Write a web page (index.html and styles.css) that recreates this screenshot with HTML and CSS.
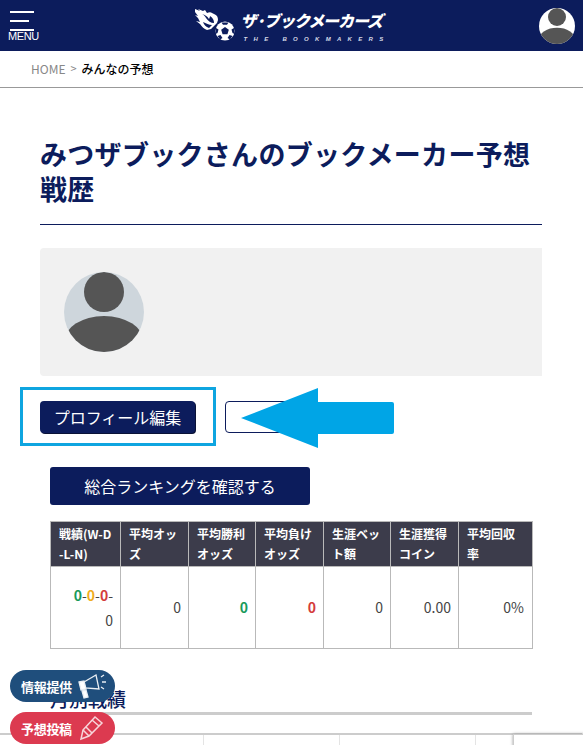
FILE: index.html
```html
<!DOCTYPE html>
<html lang="ja">
<head>
    <meta charset="UTF-8">
    <meta name="viewport" content="width=device-width, initial-scale=1.0">
    <title>みつザブックさんのブックメーカー予想戦歴</title>
    <link rel="stylesheet" href="styles.css">
</head>
<body>
    <div class="page">
        <header class="site-header">
            <div class="menu-btn">
                <span class="menu-bar"></span>
                <span class="menu-bar short"></span>
                <span class="menu-bar"></span>
                <span class="menu-label">MENU</span>
            </div>
            <div class="logo">
                <svg class="logo-mark" width="44" height="36" viewBox="0 0 44 36">
                    <g fill="#fff">
                        <path d="M1 1l5 2-2-2 5 2 2-1 2 3c2-1 4-1 5 0l2 1c3 1 4 3 4 6l-1 3-6 6-4 1c-3-1-5-3-7-6l-4-3 4 1-2-4-3-3 3 1-3-4z"/>
                    </g>
                    <path d="M8 6c3 1 5 2 7 5 1-2 1-3 1-3 3 2 4 4 4 7-3 0-6-2-8-5-1-2-2-3-4-4z" fill="#0c1c5c"/>
                    <path d="M9 14c3 1 6 3 9 3l-3 3c-3-1-5-3-6-6z" fill="#0c1c5c"/>
                    <circle cx="31" cy="23" r="10.500" fill="#0c1c5c"/>
                    <circle cx="31" cy="23" r="9.500" fill="#fff"/>
                    <g fill="#0c1c5c">
                        <path d="M31 19l3.800 2.800-1.400 4.500h-4.800l-1.400-4.500z"/>
                        <path d="M27.500 14.500h7l-1.500 2.200h-4zM40 20l.5 6-2-1-1-3.500zM22 20l-.5 6 2-1 1-3.500zM26 31.500l-2.500-3.500 3-1 2 3zM36 31.500l2.500-3.500-3-1-2 3z"/>
                    </g>
                </svg>
                <div class="logo-text">
                    <span class="logo-jp">ザ·ブックメーカーズ</span>
                    <span class="logo-en">THE BOOKMAKERS</span>
                </div>
            </div>
            <svg class="header-avatar" width="36" height="36" viewBox="0 0 80 80">
                <defs><clipPath id="clipTop"><circle cx="40" cy="40" r="40"/></clipPath></defs>
                <circle cx="40" cy="40" r="40" fill="#fff"/>
                <g clip-path="url(#clipTop)" fill="#555">
                    <circle cx="40" cy="20" r="20"/>
                    <ellipse cx="40" cy="70" rx="40" ry="26"/>
                </g>
            </svg>
        </header>

        <nav class="breadcrumb">
            <span class="crumb-home">HOME</span>
            <span class="crumb-sep">&gt;</span>
            <span class="crumb-now">みんなの予想</span>
        </nav>

        <main class="content">
            <h1 class="page-title">みつザブックさんのブックメーカー予想戦歴</h1>

            <div class="profile-box">
                <svg width="80" height="80" viewBox="0 0 80 80">
                    <defs><clipPath id="clipMain"><circle cx="40" cy="40" r="40"/></clipPath></defs>
                    <circle cx="40" cy="40" r="40" fill="#ced6dc"/>
                    <g clip-path="url(#clipMain)" fill="#555">
                        <circle cx="40" cy="20" r="20"/>
                        <ellipse cx="40" cy="70" rx="40" ry="26"/>
                    </g>
                </svg>
            </div>

            <div class="profile-actions">
                <a class="btn-edit">プロフィール編集</a>
                <a class="btn-outline"></a>
            </div>

            <div class="inner">
                <a class="btn-rank">総合ランキングを確認する</a>

                <table class="stats">
                    <tr>
                        <th class="c1">戦績(W-D<br>-L-N)</th>
                        <th class="c2">平均オッズ</th>
                        <th class="c3">平均勝利オッズ</th>
                        <th class="c4">平均負けオッズ</th>
                        <th class="c5">生涯ベット額</th>
                        <th class="c6">生涯獲得コイン</th>
                        <th class="c7">平均回収率</th>
                    </tr>
                    <tr>
                        <td><b class="win">0</b>-<b class="draw">0</b>-<b class="lose">0</b>-<br>0</td>
                        <td>0</td>
                        <td><b class="win">0</b></td>
                        <td><b class="lose">0</b></td>
                        <td>0</td>
                        <td>0.00</td>
                        <td class="rate">0%</td>
                    </tr>
                </table>

                <h2 class="section-title">月別戦績</h2>
                <div class="monthly">
                    <span></span><span></span><span></span><span></span>
                </div>
            </div>
        </main>

        <!-- annotation drawn over the page -->
        <div class="note-box"></div>
        <svg class="note-arrow" width="153" height="60" viewBox="0 0 153 60">
            <path d="M0 30L77 0V14H151a2 2 0 0 1 2 2V44a2 2 0 0 1-2 2H77V60z" fill="#00a5e6"/>
        </svg>

        <a class="float-btn info">
            情報提供
            <svg width="28" height="26" viewBox="0 0 28 26" fill="none" stroke="#e9eef3" stroke-width="1.300">
                <path d="M6 9l12-7 3 14-14-1z"/>
                <path d="M1 9l5-1 2 8-5 1z" fill="#fff"/>
                <path d="M4 18l4-1 2 7-4 1z" fill="#fff"/>
                <path d="M23 4l3-2M24 9h4M23 14l3 2"/>
            </svg>
        </a>
        <a class="float-btn post">
            予想投稿
            <svg width="28" height="26" viewBox="0 0 28 26" fill="none" stroke="#f7d5da" stroke-width="1.500">
                <path d="M5 15L17 2l7 6-13 13-8 3z"/>
                <path d="M5 15l6 6M14 5l7 6M8 12l6 6"/>
            </svg>
        </a>
        <div class="captcha-corner"></div>
    </div>
</body>
</html>
```

FILE: styles.css
```css
html, body {
    margin: 0;
    padding: 0;
}
body {
    font-family: "Noto Sans CJK JP", "Noto Sans", sans-serif;
    color: #222;
    background-color: #fff;
}
.page {
    position: relative;
    width: 583px;
    height: 745px;
    overflow: hidden;
}

/* header */
.site-header {
    display: grid;
    grid-template-columns: 1fr auto 1fr;
    align-items: center;
    height: 51px;
    padding: 0 8px;
    box-sizing: border-box;
    background-color: #0c1c5c;
}
.menu-btn {
    display: flex;
    flex-direction: column;
    align-items: flex-start;
    align-self: start;
    width: 30px;
    padding-top: 11px;
}
.menu-bar {
    width: 24px;
    height: 2px;
    margin: 0 0 7px 2px;
    background-color: #fff;
}
.menu-bar.short {
    width: 19px;
}
.menu-bar:nth-child(3) {
    margin-bottom: -1px;
}
.menu-label {
    font-family: "Liberation Sans", sans-serif;
    font-size: 11px;
    line-height: 12px;
    letter-spacing: -0.4px;
    color: #fff;
}
.logo {
    display: flex;
    align-items: center;
    gap: 3px;
}
.logo-text {
    display: flex;
    flex-direction: column;
}
.logo-jp {
    font-size: 16px;
    line-height: 24px;
    font-weight: 900;
    font-style: italic;
    letter-spacing: -1.100px;
    white-space: nowrap;
    color: #fff;
}
.logo-en {
    margin: 3px 0 0 3px;
    font-family: "Liberation Sans", sans-serif;
    font-size: 6px;
    line-height: 8px;
    font-weight: bold;
    font-style: italic;
    letter-spacing: 6.300px;
    white-space: nowrap;
    color: #d5d9e6;
}
.header-avatar {
    justify-self: end;
}

/* breadcrumb */
.breadcrumb {
    display: flex;
    align-items: center;
    gap: 5px;
    height: 34px;
    padding: 0 0 2px 31px;
    border-bottom: 1px solid #999;
    font-size: 12px;
}
.crumb-home {
    color: #888;
}
.crumb-sep {
    color: #888;
    font-size: 11px;
}
.crumb-now {
    color: #000;
    font-weight: 500;
}

/* main */
.content {
    padding: 48px 41px 0 40px;
}
.page-title {
    margin: 0;
    padding-bottom: 18px;
    border-bottom: 1px solid #0c1c5c;
    font-size: 27px;
    line-height: 35px;
    letter-spacing: 0.3px;
    font-weight: bold;
    color: #0c1c5c;
}
.profile-box {
    display: flex;
    align-items: center;
    height: 128px;
    margin-top: 23px;
    padding-left: 24px;
    box-sizing: border-box;
    border-radius: 4px 0 0 4px;
    background-color: #f1f1f1;
}
.profile-actions {
    display: flex;
    gap: 30px;
    margin-top: 25px;
}
.btn-edit {
    display: block;
    width: 155px;
    height: 32px;
    border-radius: 4px;
    background-color: #0c1c5c;
    box-shadow: 1px 1px 0 #0a1236;
    color: #fff;
    font-size: 16px;
    line-height: 32px;
    text-align: center;
}
.btn-outline {
    display: block;
    width: 90px;
    height: 30px;
    border: 1px solid #0c1c5c;
    border-radius: 4px;
}
.inner {
    padding: 34px 10px 0;
}
.btn-rank {
    display: block;
    width: 260px;
    height: 38px;
    border-radius: 3px;
    background-color: #0c1c5c;
    color: #fff;
    font-size: 16px;
    line-height: 38px;
    text-align: center;
}
.stats {
    width: 482px;
    margin-top: 16px;
    border-collapse: collapse;
    table-layout: fixed;
    font-size: 14px;
}
.stats th, .stats td {
    box-sizing: border-box;
    border: 1px solid #b9b9b9;
    padding: 0 7px;
}
.stats th {
    height: 45px;
    padding-left: 8px;
    padding-right: 4px;
    background-color: #3c3c4b;
    color: #fff;
    font-size: 12px;
    line-height: 20px;
    text-align: left;
    word-break: break-all;
}
.stats th.c7 {
    padding-right: 14px;
}
.stats td {
    height: 82px;
    line-height: 25px;
    text-align: right;
    color: #444;
}
.stats td.rate {
    padding-right: 8px;
}
.c1 { width: 70px; }
.c2 { width: 68px; }
.c3 { width: 67px; }
.c4 { width: 68px; }
.c5 { width: 67px; }
.c6 { width: 68px; }
.c7 { width: 74px; }
.win { color: #1a9a5c; }
.draw { color: #f0ad1e; }
.lose { color: #d43c3c; }
.section-title {
    margin: 37px 0 0;
    border-bottom: 3px solid #ccc;
    font-size: 19px;
    line-height: 26px;
    font-weight: 500;
    color: #0c1c5c;
}

/* next table, only its top edge is on screen */
.monthly {
    display: flex;
    height: 30px;
    margin: 18px -50px 0 -50px;
    border-top: 2px solid #ccc;
}
.monthly span {
    flex: none;
    width: 136px;
    box-sizing: border-box;
    border-right: 1px solid #e4e4e4;
}
.monthly span:first-child {
    width: 204px;
}

/* annotation */
.note-box {
    position: absolute;
    left: 20px;
    top: 387px;
    width: 190px;
    height: 53px;
    border: 3px solid #0ea5e0;
}
.note-arrow {
    position: absolute;
    left: 241px;
    top: 388px;
}

/* floating buttons */
.float-btn {
    position: absolute;
    left: 10px;
    display: flex;
    align-items: center;
    gap: 6px;
    width: 105px;
    height: 32px;
    padding-left: 11px;
    box-sizing: border-box;
    border-radius: 16px;
    color: #fff;
    font-size: 13px;
    letter-spacing: -0.3px;
    font-weight: bold;
    white-space: nowrap;
}
.float-btn.info {
    top: 670px;
    background-color: #1f4e7c;
}
.float-btn.post {
    top: 712px;
    background-color: #dc3a50;
}
.captcha-corner {
    position: absolute;
    left: 513px;
    top: 734px;
    width: 80px;
    height: 30px;
    border: 1px solid #ccc;
    background-color: #fff;
    box-shadow: 0 0 3px #999;
}
```
